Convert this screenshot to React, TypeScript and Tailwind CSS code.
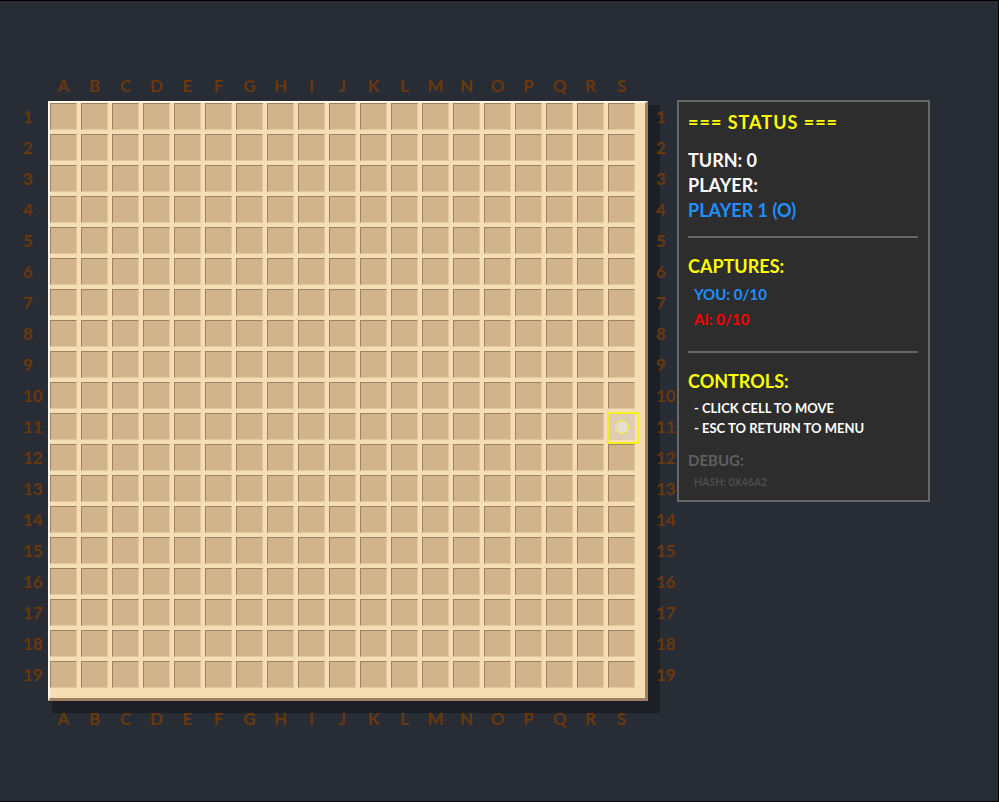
import React from 'react';

const COLS = 'ABCDEFGHIJKLMNOPQRS'.split('');
const ROWS = Array.from({ length: 19 }, (_, i) => i + 1);
const FONT = { fontFamily: 'Lato, "Open Sans", sans-serif' };

const ColumnLabels = ({ className }: { className: string }) => (
  <div className={`flex gap-[4px] pl-[27px] ${className}`}>
    {COLS.map((c) => (
      <div key={c} className="w-[27px] text-center text-[17px] leading-[16px] font-bold text-[#6b380e]">
        {c}
      </div>
    ))}
  </div>
);

const RowLabels = ({ className }: { className: string }) => (
  <div className={`flex flex-col gap-[4px] pt-[2px] ${className}`}>
    {ROWS.map((r) => (
      <div key={r} className="h-[27px] flex items-center text-[17px] font-bold text-[#6b380e]">
        {r}
      </div>
    ))}
  </div>
);

const Cell = ({ hover }: { hover?: boolean }) => (
  <div
    className={`relative w-[27px] h-[27px] border-t border-l border-[#a08262] border-r border-b border-r-[#e2c79f] border-b-[#e2c79f] ${
      hover ? 'bg-[#dcc7ad]' : 'bg-[#d2b48c]'
    }`}
  >
    {hover && (
      <>
        <div className="absolute -left-[2px] -top-[2px] w-[32px] h-[32px] border-2 border-[#f5f01e] bg-white/10" />
        <div className="absolute inset-0 flex items-center justify-center">
          <div className="w-[14px] h-[14px] rounded-full bg-[#e8ddd3] border border-[#f5f01e]" />
        </div>
      </>
    )}
  </div>
);

const Board = () => (
  <div className="w-[600px] h-[600px] bg-[#f5deb3] border-t-2 border-l-2 border-[#fff8e9] border-r-[3px] border-b-[3px] border-r-[#a08064] border-b-[#a08064] shadow-[8px_8px_0_4px_rgba(0,0,0,0.28)]">
    <div className="grid grid-cols-[repeat(19,27px)] gap-[4px]">
      {ROWS.map((r) =>
        COLS.map((c, ci) => <Cell key={`${r}-${c}`} hover={r === 11 && ci === 18} />)
      )}
    </div>
  </div>
);

const Divider = ({ className }: { className: string }) => (
  <div className={`h-[2px] bg-[#666666] ${className}`} />
);

const StatusPanel = () => (
  <div className="mt-[22px] w-[253px] h-[402px] border-2 border-[#676767] bg-[#2d2d2d] pl-[9px] pr-[10px] pt-[8px] font-bold">
    <div className="text-[18px] leading-[24px] tracking-[1px] text-[#ffff00]">=== STATUS ===</div>
    <div className="mt-[14px] text-[18px] leading-[25px]">
      <div className="text-white">TURN: 0</div>
      <div className="text-white">PLAYER:</div>
      <div className="text-[#1e90ff]">PLAYER 1 (O)</div>
    </div>
    <Divider className="mt-[13px]" />
    <div className="mt-[16px] text-[18px] leading-[24px] text-[#ffff00]">CAPTURES:</div>
    <div className="mt-[4px] pl-[6px] text-[15px] leading-[25px]">
      <div className="text-[#1e90ff]">YOU: 0/10</div>
      <div className="text-[#ff0000]">AI: 0/10</div>
    </div>
    <Divider className="mt-[19px]" />
    <div className="mt-[16px] text-[18px] leading-[24px] text-[#ffff00]">CONTROLS:</div>
    <div className="mt-[5px] pl-[6px] text-[13px] leading-[20px] text-white">
      <div>- CLICK CELL TO MOVE</div>
      <div>- ESC TO RETURN TO MENU</div>
    </div>
    <div className="mt-[12px] text-[15px] leading-[20px] text-[#5f5f5f]">DEBUG:</div>
    <div className="mt-[4px] pl-[6px] text-[10.5px] leading-[16px] text-[#4d4d4d]">HASH: 0X46A2</div>
  </div>
);

export default function App() {
  return (
    <div
      style={FONT}
      className="w-full h-[802px] bg-[#282c34] border-t border-r border-b border-black pt-[77px] pl-[23px] flex items-start overflow-hidden"
    >
      <div className="flex flex-col">
        <ColumnLabels className="h-[23px]" />
        <div className="flex">
          <RowLabels className="w-[25px]" />
          <Board />
          <RowLabels className="ml-[8px] w-[21px]" />
        </div>
        <ColumnLabels className="mt-[10px]" />
      </div>
      <StatusPanel />
    </div>
  );
}
